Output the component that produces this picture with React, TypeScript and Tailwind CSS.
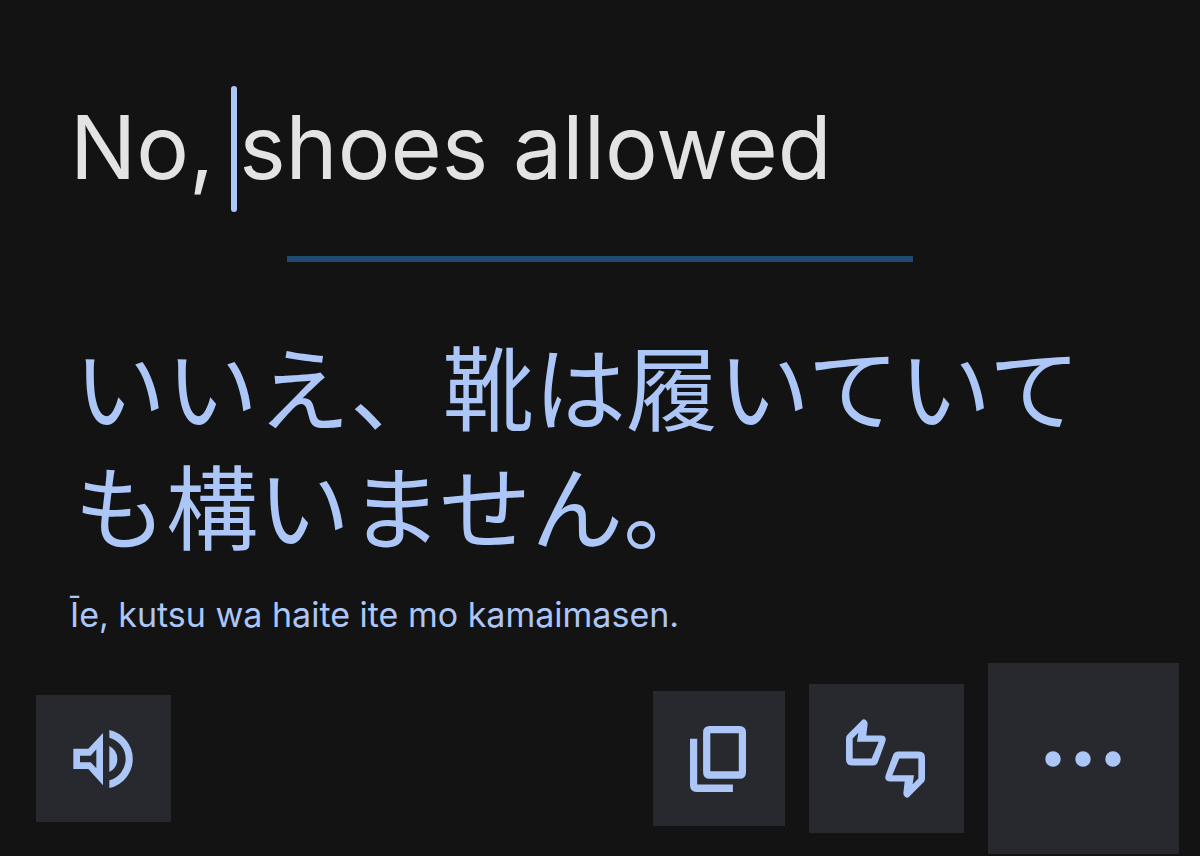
import type { ReactNode } from 'react'

const SOURCE_TEXT = 'No, shoes allowed'
const TRANSLATION = 'いいえ、靴は履いていても構いません。'
const ROMAJI = 'Īe, kutsu wa haite ite mo kamaimasen.'

function SpeakerIcon() {
  return (
    <svg viewBox="0 0 180 174" className="h-[58px] w-[60px]" fill="currentColor" aria-hidden="true">
      <path
        fillRule="evenodd"
        d="M1 56H46L90 9V166L46 117H1ZM21 77V97H53L70 115V58L53 77Z"
      />
      <path d="M109 48A43.7 43.7 0 0 1 109 126Z" />
      <path d="M109 0A89 89 0 0 1 109 174V151A66.3 66.3 0 0 0 109 23Z" />
    </svg>
  )
}

function CopyIcon() {
  return (
    <svg viewBox="0 0 171 201" className="h-[66px] w-14" fill="currentColor" aria-hidden="true">
      <path
        fillRule="evenodd"
        d="M60 0H151Q171 0 171 20V141Q171 161 151 161H60Q40 161 40 141V20Q40 0 60 0ZM62 22V138H149V22Z"
      />
      <path d="M0 39H22V178H131V201H20Q0 201 0 181Z" />
    </svg>
  )
}

const thumbPath =
  'M5 46L47 4Q53-3 60 3Q65 8 65 14L61 49H106Q123 50 118 68L96 128Q92 139 80 139H19Q0 139 0 120V58Q0 51 5 46ZM20 58V118H77L98 68H33L37 41Z'

function ThumbsIcon() {
  return (
    <svg viewBox="0 0 237 236" className="size-[79px]" fill="currentColor" aria-hidden="true">
      <path fillRule="evenodd" d={thumbPath} />
      <path fillRule="evenodd" d={thumbPath} transform="rotate(180 118.5 118)" />
    </svg>
  )
}

function MoreIcon() {
  return (
    <svg viewBox="0 0 76 16" className="h-4 w-[76px]" fill="currentColor" aria-hidden="true">
      <circle cx="8" cy="8" r="7.7" />
      <circle cx="38" cy="8" r="7.7" />
      <circle cx="68" cy="8" r="7.7" />
    </svg>
  )
}

type ActionButtonProps = {
  label: string
  className: string
  children: ReactNode
}

function ActionButton({ label, className, children }: ActionButtonProps) {
  return (
    <button
      type="button"
      aria-label={label}
      className={`flex shrink-0 items-center justify-center bg-[#28292e] pr-0.5 text-[#adc6f8] ${className}`}
    >
      {children}
    </button>
  )
}

function App() {
  return (
    <main className="flex min-h-screen flex-col bg-[#131314] font-['Inter','Noto_Sans_CJK_JP',sans-serif] text-[#adc6f8]">
      <div className="relative mt-[86px] px-[70px]">
        <input
          type="text"
          aria-label="Source text"
          defaultValue={SOURCE_TEXT}
          className="block h-[126px] w-full bg-transparent pb-1 text-[88px] text-[#e3e3e3] outline-none"
        />
        <span className="absolute top-0 left-[231px] h-full w-1.5 rounded-full bg-[#adc6f8]" />
      </div>

      <hr className="mx-auto mt-11 w-[626px] max-w-full border-t-6 border-[#204a73]" />

      <section className="mt-[62px] px-[74px]">
        <p lang="ja" className="font-['Noto_Sans_CJK_JP',sans-serif] text-[92px] leading-[119px]">
          {TRANSLATION}
        </p>
      </section>
      <p className="mt-[33px] px-[70px] text-[34px] leading-10">{ROMAJI}</p>

      <div className="mt-7 flex items-center gap-6 pr-[21px] pl-9">
        <ActionButton label="Listen" className="mr-auto h-[127px] w-[135px]">
          <SpeakerIcon />
        </ActionButton>
        <ActionButton label="Copy translation" className="h-[135px] w-[132px]">
          <CopyIcon />
        </ActionButton>
        <ActionButton label="Rate translation" className="h-[149px] w-[155px]">
          <ThumbsIcon />
        </ActionButton>
        <ActionButton label="More options" className="size-[191px]">
          <MoreIcon />
        </ActionButton>
      </div>
    </main>
  )
}

export default App
